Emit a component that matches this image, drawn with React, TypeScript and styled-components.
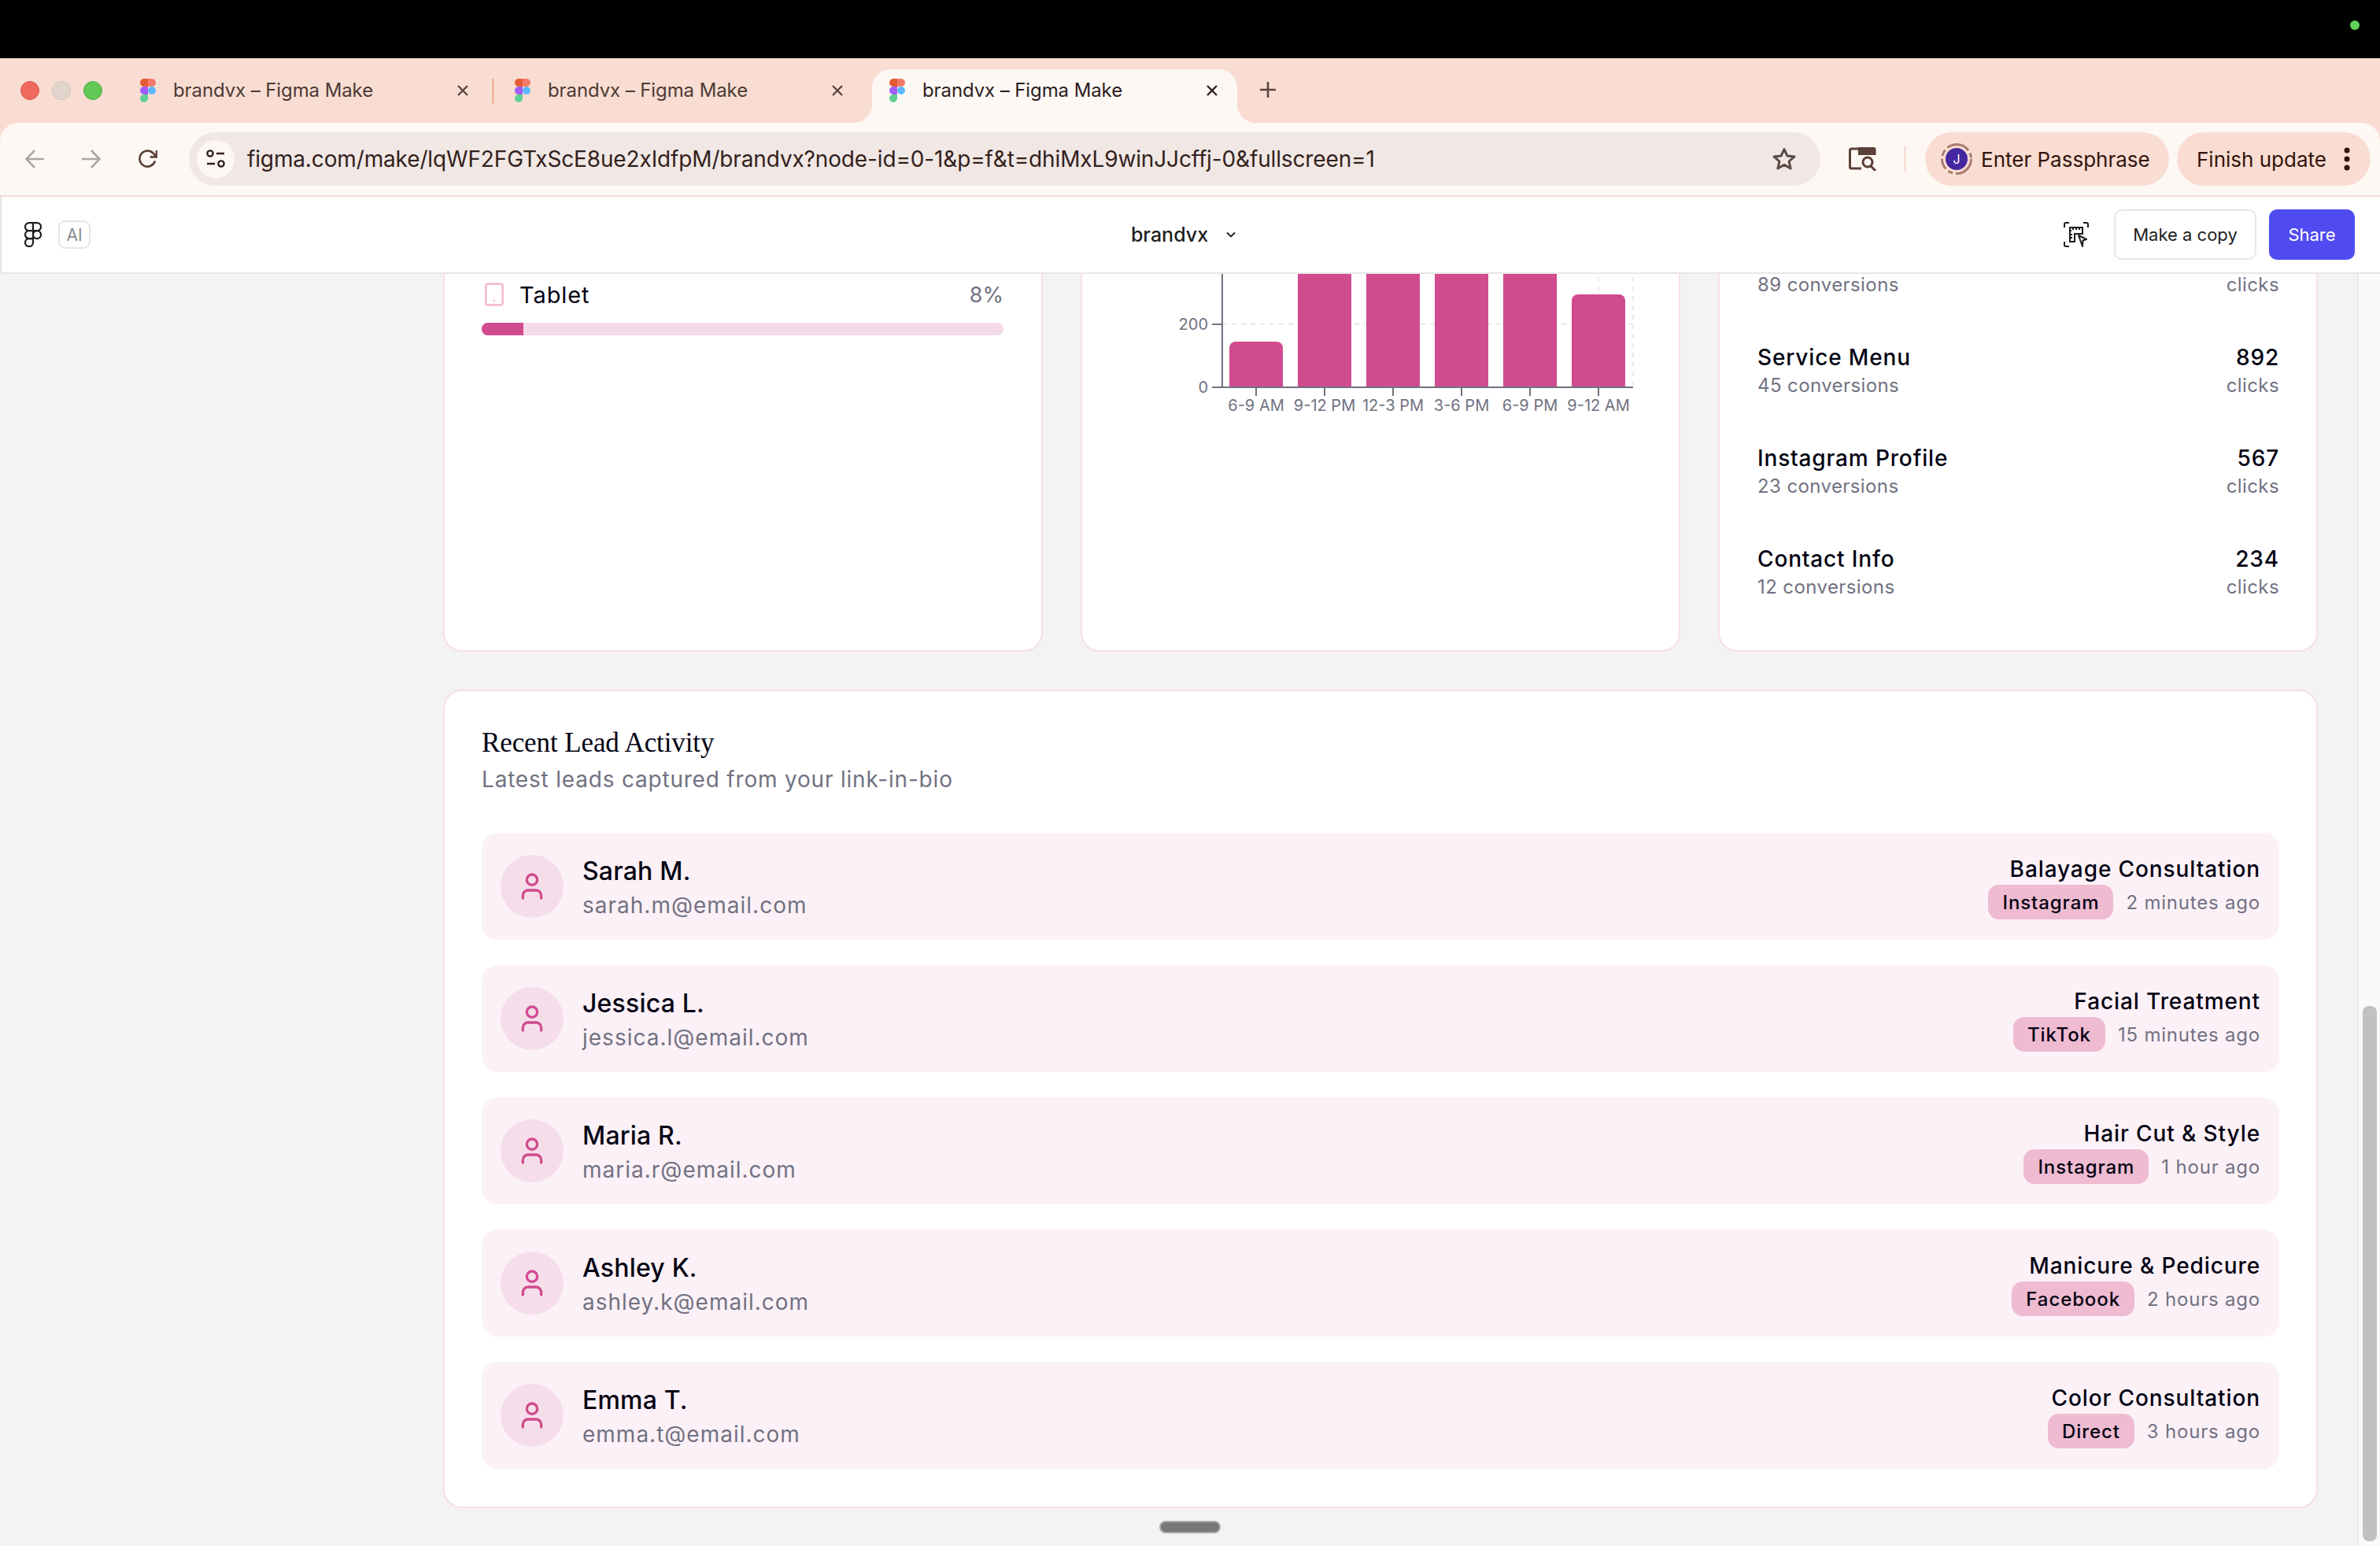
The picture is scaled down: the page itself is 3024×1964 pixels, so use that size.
import styled, { createGlobalStyle } from 'styled-components'
import { Tablet, User } from 'lucide-react'

const GlobalStyle = createGlobalStyle`
  html, body {
    margin: 0;
    padding: 0;
    background: #f3f3f3;
    overflow: hidden;
  }
  * {
    box-sizing: border-box;
  }
`

const UI_FONT = `Inter, "Liberation Sans", sans-serif`

const Page = styled.div`
  width: 3024px;
  height: 1964px;
  display: flex;
  flex-direction: column;
  overflow: hidden;
  position: relative;
  font-family: ${UI_FONT};
`

const MenuBar = styled.div`
  height: 74px;
  flex: none;
  background: #000;
  display: flex;
  justify-content: flex-end;
  align-items: flex-start;
  padding: 26px 26px 0 0;
`

const CameraDot = styled.div`
  width: 12px;
  height: 12px;
  border-radius: 50%;
  background: #62d158;
`

const BrowserChrome = styled.div`
  flex: none;
  background: #f9ddd2;
`

const TabStrip = styled.div`
  height: 82px;
  display: flex;
  align-items: flex-end;
  padding-left: 26px;
`

const TrafficLights = styled.div`
  display: flex;
  gap: 16px;
  width: 130px;
  height: 68px;
  padding-top: 15px;
  flex: none;
`

const Light = styled.div<{ $color: string; $edge: string }>`
  width: 24px;
  height: 24px;
  border-radius: 50%;
  background: ${(p) => p.$color};
  border: 1px solid ${(p) => p.$edge};
`

const Tab = styled.div<{ $active?: boolean }>`
  width: 464px;
  height: 68px;
  flex: none;
  display: flex;
  align-items: center;
  padding: 0 20px 14px 22px;
  margin-right: 12px;
  position: relative;
  border-radius: 24px 24px 0 0;
  background: ${(p) => (p.$active ? '#fef8f5' : 'transparent')};
  color: ${(p) => (p.$active ? '#2b201d' : '#4c3a35')};

  ${(p) =>
    p.$active &&
    `
    &::before, &::after {
      content: '';
      position: absolute;
      bottom: 0;
      width: 24px;
      height: 24px;
    }
    &::before {
      left: -24px;
      background: radial-gradient(circle at 0 0, transparent 24px, #fef8f5 24.5px);
    }
    &::after {
      right: -24px;
      background: radial-gradient(circle at 100% 0, transparent 24px, #fef8f5 24.5px);
    }
  `}
`

const TabDivider = styled.div`
  position: absolute;
  right: -8px;
  top: 12px;
  width: 3px;
  height: 32px;
  background: #efb9a4;
`

const TabTitle = styled.span`
  margin-left: 22px;
  flex: 1;
  font-size: 24px;
  letter-spacing: -0.1px;
  line-height: 30px;
`

const TabClose = styled.svg`
  width: 16px;
  height: 16px;
  flex: none;
  margin-right: 4px;
`

const NewTab = styled.svg`
  width: 22px;
  height: 22px;
  margin: 0 0 31px 16px;
  flex: none;
`

const Toolbar = styled.div`
  height: 94px;
  display: flex;
  align-items: center;
  padding: 0 12px 0 8px;
  background: #fef8f5;
  border-radius: 24px 24px 0 0;
  border-bottom: 2px solid #f5dfd6;
`

const NavButton = styled.div`
  width: 72px;
  display: flex;
  justify-content: center;
  flex: none;
`

const AddressBar = styled.div`
  width: 2073px;
  height: 68px;
  margin-left: 16px;
  flex: none;
  display: flex;
  align-items: center;
  padding: 0 30px 0 10px;
  border-radius: 34px;
  background: #f1e8e5;
`

const SiteBadge = styled.div`
  width: 48px;
  height: 48px;
  border-radius: 50%;
  background: #fef8f5;
  display: flex;
  align-items: center;
  justify-content: center;
  flex: none;
`

const UrlText = styled.span`
  margin-left: 16px;
  flex: 1;
  font-size: 28px;
  letter-spacing: -0.14px;
  color: #33211c;
  white-space: nowrap;
`

const LensButton = styled.div`
  margin-left: 36px;
  display: flex;
  flex: none;
`

const ToolbarDivider = styled.div`
  width: 3px;
  height: 32px;
  margin: 0 24px 0 34px;
  background: #f5dfd6;
  flex: none;
`

const Pill = styled.div<{ $width: number }>`
  width: ${(p) => p.$width}px;
  height: 68px;
  flex: none;
  display: flex;
  align-items: center;
  border-radius: 34px;
  background: #f9ddd2;
  color: #33140c;
  font-size: 26px;
  white-space: nowrap;
`

const PassphrasePill = styled(Pill)`
  padding-left: 20px;
  gap: 11px;
  margin-right: 10px;
`

const UpdatePill = styled(Pill)`
  padding-left: 25px;
  gap: 22px;
`

const KebabDots = styled.svg`
  width: 8px;
  height: 32px;
  flex: none;
`

const FigmaBar = styled.div`
  height: 98px;
  flex: none;
  display: grid;
  grid-template-columns: 1fr auto 1fr;
  align-items: center;
  padding: 0 32px 0 29px;
  background: #fff;
  border-left: 2px solid #e6e6e6;
  border-bottom: 2px solid #e6e6e6;
`

const FigmaBarLeft = styled.div`
  display: flex;
  align-items: center;
  gap: 21px;
`

const AiBadge = styled.div`
  width: 41px;
  height: 36px;
  border: 2px solid #e6e6e6;
  border-radius: 9px;
  display: flex;
  align-items: center;
  justify-content: center;
  font-size: 21px;
  color: #8a8a8a;
`

const FileName = styled.div`
  display: flex;
  align-items: center;
  gap: 23px;
  font-size: 25px;
  font-weight: 500;
  color: #1e1e1e;
  margin-right: 16px;
`

const FigmaBarRight = styled.div`
  display: flex;
  align-items: center;
  justify-content: flex-end;
`

const CopyButton = styled.div`
  width: 181px;
  height: 64px;
  margin: 0 16px 0 32px;
  border: 2px solid #e6e6e6;
  border-radius: 10px;
  display: flex;
  align-items: center;
  justify-content: center;
  font-size: 22px;
  color: #1e1e1e;
`

const ShareButton = styled.div`
  width: 109px;
  height: 64px;
  border-radius: 10px;
  display: flex;
  align-items: center;
  justify-content: center;
  background: #4f4bf0;
  color: #fff;
  font-size: 22px;
`

const Viewport = styled.div`
  flex: 1;
  min-height: 0;
  display: flex;
  overflow: hidden;
  background: #f3f3f3;
`

const Main = styled.main`
  flex: 1;
  min-width: 0;
  overflow: hidden;
  padding: 0 50px 0 563px;
`

const Scrollbar = styled.div`
  width: 29px;
  flex: none;
  padding: 930px 4px 6px 5px;
  background: #fafafa;
  border-left: 2px solid #e8e8e8;
`

const ScrollThumb = styled.div`
  height: 100%;
  border-radius: 8px;
  background: #c1c1c1;
`

const HomeHandle = styled.div`
  position: absolute;
  left: 1473px;
  top: 1932px;
  width: 78px;
  height: 16px;
  border-radius: 8px;
  background: #777;
  border: 2px solid #aaa;
`

/* top row sits partly above the fold, as if the page had been scrolled */
const CardRow = styled.div`
  display: grid;
  grid-template-columns: repeat(3, 762px);
  gap: 48px;
  margin-top: -78px;
  height: 558px;
`

const Card = styled.section`
  background: #fff;
  border: 2px solid #f6dfea;
  border-radius: 24px;
`

const DeviceCard = styled(Card)`
  padding: 82px 48px 0 47px;
`

const DeviceRow = styled.div`
  height: 40px;
  display: flex;
  align-items: center;
  gap: 16px;
  color: #f4bcd5;
`

const DeviceName = styled.span`
  flex: 1;
  font-size: 29px;
  letter-spacing: 0.9px;
  color: #030213;
`

const DevicePercent = styled.span`
  font-size: 27px;
  color: #717182;
`

const ProgressTrack = styled.div`
  height: 16px;
  margin-top: 16px;
  border-radius: 8px;
  overflow: hidden;
  background: #f5dae8;
`

const ProgressFill = styled.div`
  height: 100%;
  background: #d14b8f;
`

const ChartCard = styled(Card)`
  overflow: hidden;
`

const ChartSvg = styled.svg`
  display: block;
  width: 758px;
  height: 554px;
  font-family: ${UI_FONT};
`

const LinksCard = styled(Card)`
  padding: 34px 47px 0 48px;
  display: flex;
  flex-direction: column;
  gap: 56px;
`

const LinkRow = styled.div`
  display: flex;
  justify-content: space-between;
`

const LinkEnd = styled.div`
  text-align: right;
`

const LinkTitle = styled.div`
  min-height: 40px;
  font-size: 28px;
  line-height: 40px;
  font-weight: 500;
  letter-spacing: 0.85px;
  color: #030213;
`

const LinkSub = styled.div`
  font-size: 24px;
  line-height: 32px;
  letter-spacing: 0.4px;
  color: #717182;
`

const LeadsCard = styled(Card)`
  margin-top: 48px;
  padding: 48px 47px;
  height: 1040px;
`

const LeadsTitle = styled.h2`
  margin: 0;
  font-family: "Liberation Serif", serif;
  font-weight: 400;
  font-size: 35px;
  line-height: 36px;
  letter-spacing: -0.1px;
  color: #030213;
`

const LeadsSubtitle = styled.p`
  margin: 8px 0 48px;
  font-size: 28px;
  line-height: 40px;
  letter-spacing: 0.8px;
  color: #717182;
`

const LeadList = styled.div`
  display: flex;
  flex-direction: column;
  gap: 32px;
`

const LeadRow = styled.div`
  height: 136px;
  padding: 0 24px;
  display: flex;
  align-items: center;
  justify-content: space-between;
  border-radius: 20px;
  background: #fcf1f7;
`

const LeadPerson = styled.div`
  display: flex;
  align-items: center;
  gap: 24px;
`

const LeadAvatar = styled.div`
  width: 80px;
  height: 80px;
  border-radius: 50%;
  display: flex;
  align-items: center;
  justify-content: center;
  background: #f5deea;
  color: #d14b8f;
`

const LeadText = styled.div`
  padding-top: 2px;
`

const LeadName = styled.div`
  font-size: 32px;
  line-height: 44px;
  font-weight: 500;
  letter-spacing: 0.2px;
  color: #030213;
`

const LeadEmail = styled.div`
  margin-top: 1px;
  font-size: 28px;
  line-height: 40px;
  letter-spacing: 1px;
  color: #717182;
`

const LeadMeta = styled.div`
  display: flex;
  flex-direction: column;
  align-items: flex-end;
`

const LeadService = styled.div`
  font-size: 28px;
  line-height: 40px;
  font-weight: 500;
  letter-spacing: 0.9px;
  color: #030213;
`

const LeadSourceRow = styled.div`
  display: flex;
  align-items: center;
  gap: 16px;
`

const SourceBadge = styled.span`
  height: 44px;
  padding: 0 18px;
  display: flex;
  align-items: center;
  border-radius: 14px;
  background: #eebbd0;
  font-size: 24px;
  font-weight: 500;
  letter-spacing: 0.9px;
  color: #030213;
`

const LeadTime = styled.span`
  font-size: 24px;
  letter-spacing: 0.8px;
  color: #717182;
`

const FigmaColorIcon = () => (
  <svg width="20" height="30" viewBox="0 0 20 30" style={{ flex: 'none' }}>
    <path d="M0 5a5 5 0 0 1 5-5h5v10H5a5 5 0 0 1-5-5z" fill="#e55b34" />
    <path d="M10 0h5a5 5 0 0 1 0 10h-5z" fill="#f37a68" />
    <path d="M0 15a5 5 0 0 1 5-5h5v10H5a5 5 0 0 1-5-5z" fill="#a25cf8" />
    <circle cx="15" cy="15" r="5" fill="#5bb8ff" />
    <path d="M0 25a5 5 0 0 1 5-5h5v5a5 5 0 0 1-10 0z" fill="#5fd08f" />
  </svg>
)

const CloseIcon = ({ color }: { color: string }) => (
  <TabClose viewBox="0 0 16 16">
    <path d="M2 2l12 12M14 2L2 14" stroke={color} strokeWidth="2.4" fill="none" />
  </TabClose>
)

const tabs = [
  { active: false, divider: true },
  { active: false, divider: false },
  { active: true, divider: false },
]

const hours = [
  { label: '6-9 AM', center: 1596, top: 434 },
  { label: '9-12 PM', center: 1683, top: 200 },
  { label: '12-3 PM', center: 1770, top: 200 },
  { label: '3-6 PM', center: 1857, top: 200 },
  { label: '6-9 PM', center: 1944, top: 200 },
  { label: '9-12 AM', center: 2031, top: 374 },
]

const links = [
  { title: '', value: '', conversions: '89 conversions' },
  { title: 'Service Menu', value: '892', conversions: '45 conversions' },
  { title: 'Instagram Profile', value: '567', conversions: '23 conversions' },
  { title: 'Contact Info', value: '234', conversions: '12 conversions' },
]

const leads = [
  { name: 'Sarah M.', email: 'sarah.m@email.com', service: 'Balayage Consultation', source: 'Instagram', time: '2 minutes ago' },
  { name: 'Jessica L.', email: 'jessica.l@email.com', service: 'Facial Treatment', source: 'TikTok', time: '15 minutes ago' },
  { name: 'Maria R.', email: 'maria.r@email.com', service: 'Hair Cut & Style', source: 'Instagram', time: '1 hour ago' },
  { name: 'Ashley K.', email: 'ashley.k@email.com', service: 'Manicure & Pedicure', source: 'Facebook', time: '2 hours ago' },
  { name: 'Emma T.', email: 'emma.t@email.com', service: 'Color Consultation', source: 'Direct', time: '3 hours ago' },
]

function App() {
  const tabletShare = 8

  return (
    <Page>
      <GlobalStyle />
      <MenuBar>
        <CameraDot />
      </MenuBar>

      <BrowserChrome>
        <TabStrip>
          <TrafficLights>
            <Light $color="#f0695f" $edge="#d9534a" />
            <Light $color="#e2d5ce" $edge="#cfc2bb" />
            <Light $color="#62c755" $edge="#52ad47" />
          </TrafficLights>
          {tabs.map((tab, i) => (
            <Tab key={i} $active={tab.active}>
              <FigmaColorIcon />
              <TabTitle>brandvx – Figma Make</TabTitle>
              <CloseIcon color={tab.active ? '#2b201d' : '#5b4640'} />
              {tab.divider && <TabDivider />}
            </Tab>
          ))}
          <NewTab viewBox="0 0 22 22">
            <path d="M11 1v20M1 11h20" stroke="#5b4640" strokeWidth="2.6" fill="none" />
          </NewTab>
        </TabStrip>

        <Toolbar>
          <NavButton>
            <svg width="24" height="24" viewBox="0 0 24 24" fill="none" stroke="#b0a6a1" strokeWidth="2.6">
              <path d="M24 12H2M12 1L1.5 12 12 23" />
            </svg>
          </NavButton>
          <NavButton>
            <svg width="24" height="24" viewBox="0 0 24 24" fill="none" stroke="#b0a6a1" strokeWidth="2.6">
              <path d="M0 12h22M12 1l10.5 11L12 23" />
            </svg>
          </NavButton>
          <NavButton>
            <svg width="24" height="24" viewBox="0 0 24 24" fill="none" stroke="#5b4038" strokeWidth="2.6">
              <path d="M21 14.5A10 10 0 1 1 18.5 4.5L22 8" />
              <path d="M23 1v8.4h-8.4" />
            </svg>
          </NavButton>

          <AddressBar>
            <SiteBadge>
              <svg width="26" height="26" viewBox="0 0 26 26" fill="none" stroke="#33211c" strokeWidth="2.4">
                <circle cx="6" cy="6" r="3.6" />
                <path d="M14 6h10M2 19h10" />
                <circle cx="20" cy="19" r="3.6" />
              </svg>
            </SiteBadge>
            <UrlText>figma.com/make/lqWF2FGTxScE8ue2xIdfpM/brandvx?node-id=0-1&amp;p=f&amp;t=dhiMxL9winJJcffj-0&amp;fullscreen=1</UrlText>
            <svg width="32" height="32" viewBox="0 0 32 32" fill="none" stroke="#5b4a46" strokeWidth="3" strokeLinejoin="round">
              <path d="M16 3.5l3.8 8.4 9.2 1-6.9 6.1 2 9-8.1-4.6L7.9 28l2-9L3 12.900l9.200-1z" />
            </svg>
          </AddressBar>

          <LensButton>
            <svg width="36" height="30" viewBox="0 0 36 30" fill="none" stroke="#5b4038" strokeWidth="3">
              <path d="M12 2H3.500A2 2 0 0 0 1.500 4v21a2 2 0 0 0 2 2H16" />
              <path d="M12 0h20a2.500 2.500 0 0 1 2.500 2.500V10H12z" fill="#5b4038" stroke="none" />
              <circle cx="24" cy="19" r="6" />
              <path d="M28 24l6 6" />
            </svg>
          </LensButton>
          <ToolbarDivider />

          <PassphrasePill $width={310}>
            <svg width="40" height="40" viewBox="0 0 40 40" style={{ flex: 'none' }} fontFamily={UI_FONT}>
              <circle cx="20" cy="20" r="18.500" fill="none" stroke="#a87c6e" strokeWidth="3" strokeDasharray="30 4 6 4 14 4 8 4" />
              <circle cx="20" cy="20" r="14" fill="#4527a0" />
              <text x="20" y="26" textAnchor="middle" fontSize="16" fill="#fff">J</text>
            </svg>
            Enter Passphrase
          </PassphrasePill>
          <UpdatePill $width={246}>
            Finish update
            <KebabDots viewBox="0 0 8 32">
              <circle cx="4" cy="5" r="3.500" fill="#33140c" />
              <circle cx="4" cy="16" r="3.500" fill="#33140c" />
              <circle cx="4" cy="27" r="3.500" fill="#33140c" />
            </KebabDots>
          </UpdatePill>
        </Toolbar>
      </BrowserChrome>

      <FigmaBar>
        <FigmaBarLeft>
          <svg width="22" height="32" viewBox="0 0 22 32" fill="none" stroke="#1e1e1e" strokeWidth="2.200">
            <path d="M11 1.100H6a5 5 0 0 0 0 10h5zM11 1.100h5a5 5 0 0 1 0 10h-5zM11 11.100H6a5 5 0 0 0 0 10h5z" />
            <circle cx="16" cy="16.100" r="5" />
            <path d="M11 21.100H6a5 5 0 1 0 5 5z" />
          </svg>
          <AiBadge>AI</AiBadge>
        </FigmaBarLeft>
        <FileName>
          brandvx
          <svg width="12" height="8" viewBox="0 0 12 8" fill="none" stroke="#1e1e1e" strokeWidth="1.800">
            <path d="M1 1.500l5 5 5-5" />
          </svg>
        </FileName>
        <FigmaBarRight>
          <svg width="32" height="32" viewBox="0 0 32 32" fill="none" stroke="#1e1e1e" strokeWidth="2">
            <path d="M1 7V3a2 2 0 0 1 2-2h4M25 1h4a2 2 0 0 1 2 2v4M1 25v4a2 2 0 0 0 2 2h4" />
            <path d="M8 7h16v8H14v10H8zM8 11h2M12 7v3M16 7v3M20 7v3M8 16h3M8 20h3" />
            <path d="M19 17l10 5-4.500 1.500L24 31z" strokeLinejoin="round" />
          </svg>
          <CopyButton>Make a copy</CopyButton>
          <ShareButton>Share</ShareButton>
        </FigmaBarRight>
      </FigmaBar>

      <Viewport>
        <Main>
          <CardRow>
            <DeviceCard>
              <DeviceRow>
                <Tablet size={32} strokeWidth={2} />
                <DeviceName>Tablet</DeviceName>
                <DevicePercent>{tabletShare}%</DevicePercent>
              </DeviceRow>
              <ProgressTrack>
                <ProgressFill style={{ width: `${tabletShare}%` }} />
              </ProgressTrack>
            </DeviceCard>

            <ChartCard>
              <ChartSvg viewBox="1375 272 758 554">
                <path d="M1553 412H2075M2031 352V492M2075 352V492" stroke="#e9e9e9" strokeWidth="2" strokeDasharray="6 6" fill="none" />
                {hours.map((h) => (
                  <g key={h.label}>
                    <path
                      d={`M${h.center - 34} 492V${h.top + 8}a8 8 0 0 1 8-8h52a8 8 0 0 1 8 8V492z`}
                      fill="#d14b8f"
                    />
                    <path d={`M${h.center} 492v11`} stroke="#717182" strokeWidth="2" />
                    <text x={h.center} y="522" textAnchor="middle" fontSize="20" fill="#717182">
                      {h.label}
                    </text>
                  </g>
                ))}
                <path d="M1553 272V492H2075M1540 412h13M1540 492h13" stroke="#717182" strokeWidth="2" fill="none" />
                <text x="1535" y="419" textAnchor="end" fontSize="20" fill="#717182">200</text>
                <text x="1535" y="499" textAnchor="end" fontSize="20" fill="#717182">0</text>
              </ChartSvg>
            </ChartCard>

            <LinksCard>
              {links.map((link) => (
                <LinkRow key={link.conversions}>
                  <div>
                    <LinkTitle>{link.title}</LinkTitle>
                    <LinkSub>{link.conversions}</LinkSub>
                  </div>
                  <LinkEnd>
                    <LinkTitle>{link.value}</LinkTitle>
                    <LinkSub>clicks</LinkSub>
                  </LinkEnd>
                </LinkRow>
              ))}
            </LinksCard>
          </CardRow>

          <LeadsCard>
            <LeadsTitle>Recent Lead Activity</LeadsTitle>
            <LeadsSubtitle>Latest leads captured from your link-in-bio</LeadsSubtitle>
            <LeadList>
              {leads.map((lead) => (
                <LeadRow key={lead.email}>
                  <LeadPerson>
                    <LeadAvatar>
                      <User size={40} strokeWidth={2} />
                    </LeadAvatar>
                    <LeadText>
                      <LeadName>{lead.name}</LeadName>
                      <LeadEmail>{lead.email}</LeadEmail>
                    </LeadText>
                  </LeadPerson>
                  <LeadMeta>
                    <LeadService>{lead.service}</LeadService>
                    <LeadSourceRow>
                      <SourceBadge>{lead.source}</SourceBadge>
                      <LeadTime>{lead.time}</LeadTime>
                    </LeadSourceRow>
                  </LeadMeta>
                </LeadRow>
              ))}
            </LeadList>
          </LeadsCard>
        </Main>
        <Scrollbar>
          <ScrollThumb />
        </Scrollbar>
      </Viewport>
      <HomeHandle />
    </Page>
  )
}

export default App
